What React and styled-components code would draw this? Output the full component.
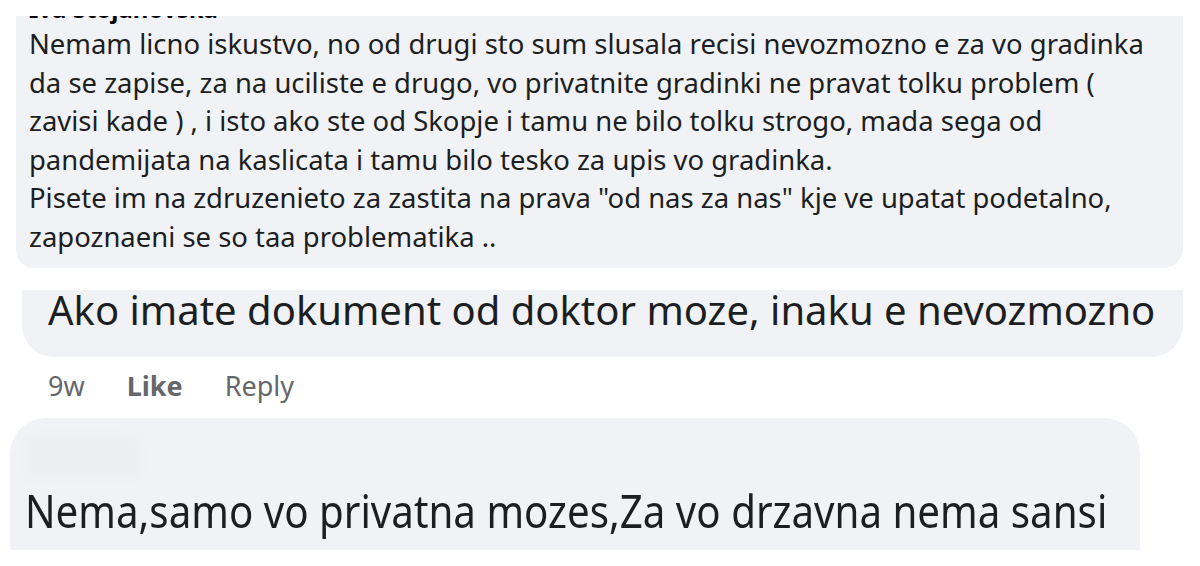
import React from "react";
import styled, { createGlobalStyle } from "styled-components";

const Global = createGlobalStyle`
  html, body {
    margin: 0;
    padding: 0;
    background: #ffffff;
  }
  body {
    width: 1200px;
    height: 566px;
    overflow: hidden;
    font-family: "Noto Sans", "Open Sans", sans-serif;
    color: #1c1e21;
  }
`;

const Page = styled("div")`
  display: flex;
  flex-direction: column;
  align-items: flex-start;
  width: 1200px;
  height: 566px;
  overflow: hidden;
`;

const Bubble = styled("div")`
  background: #f0f2f5;
  overflow: hidden;
  box-sizing: border-box;
  display: flex;
  flex-direction: column;
  flex-shrink: 0;
  margin-left: ${(p) => p.$left}px;
  margin-top: ${(p) => p.$top}px;
  width: ${(p) => p.$width}px;
  height: ${(p) => p.$height}px;
  padding-left: ${(p) => p.$pad}px;
  border-radius: ${(p) => p.$radius};
`;

const Name = styled("div")`
  font-size: 24px;
  font-weight: 700;
  line-height: 24px;
  margin-top: -19px;
  color: #050505;
  white-space: nowrap;
`;

const Body = styled("div")`
  margin-top: 4px;
  font-size: 27.45px;
  line-height: 38.5px;
  color: #1c1e21;
`;

const Line = styled("div")`
  white-space: nowrap;
`;

const BigText = styled("div")`
  font-size: 40px;
  line-height: 40px;
  color: #1c1e21;
  white-space: nowrap;
`;

const Meta = styled("div")`
  display: flex;
  align-items: center;
  gap: 42px;
  margin-left: 48px;
  margin-top: 11px;
  height: 36px;
  font-size: 27px;
  line-height: 36px;
  color: #65676b;
`;

const MetaItem = styled("span")`
  font-weight: ${(p) => (p.$bold ? 700 : 400)};
`;

const Blurred = styled("div")`
  width: 110px;
  height: 38px;
  margin-top: 20px;
  margin-left: 3px;
  border-radius: 6px;
  background: #eceef1;
  filter: blur(4px);
`;

const Condensed = styled("div")`
  font-size: 45px;
  line-height: 50px;
  color: #1c1e21;
  white-space: nowrap;
  margin-top: 10px;
  transform: scaleX(0.895);
  transform-origin: left center;
`;

const lines = [
  "Nemam licno iskustvo, no od drugi sto sum slusala recisi nevozmozno e za vo gradinka",
  "da se zapise, za na uciliste e drugo, vo privatnite gradinki ne pravat tolku problem (",
  "zavisi kade ) , i isto ako ste od Skopje i tamu ne bilo tolku strogo, mada sega od",
  "pandemijata na kaslicata i tamu bilo tesko za upis vo gradinka.",
  'Pisete im na zdruzenieto za zastita na prava "od nas za nas" kje ve upatat podetalno,',
  "zapoznaeni se so taa problematika ..",
];

export default function App() {
  return (
    <Page>
      <Global />
      <Bubble $left={16} $top={16} $width={1167} $height={252} $pad={13} $radius="0 0 20px 18px">
        <Name>Iva Stojanovska</Name>
        <Body>
          {lines.map((l, i) => (
            <Line key={i}>{l}</Line>
          ))}
        </Body>
      </Bubble>

      <Bubble $left={22} $top={22} $width={1161} $height={67} $pad={26} $radius="0 0 32px 32px">
        <BigText>Ako imate dokument od doktor moze, inaku e nevozmozno</BigText>
      </Bubble>

      <Meta>
        <MetaItem>9w</MetaItem>
        <MetaItem $bold>Like</MetaItem>
        <MetaItem>Reply</MetaItem>
      </Meta>

      <Bubble $left={10} $top={14} $width={1130} $height={132} $pad={15} $radius="36px 36px 0 0">
        <Blurred />
        <Condensed>Nema,samo vo privatna mozes,Za vo drzavna nema sansi</Condensed>
      </Bubble>
    </Page>
  );
}
